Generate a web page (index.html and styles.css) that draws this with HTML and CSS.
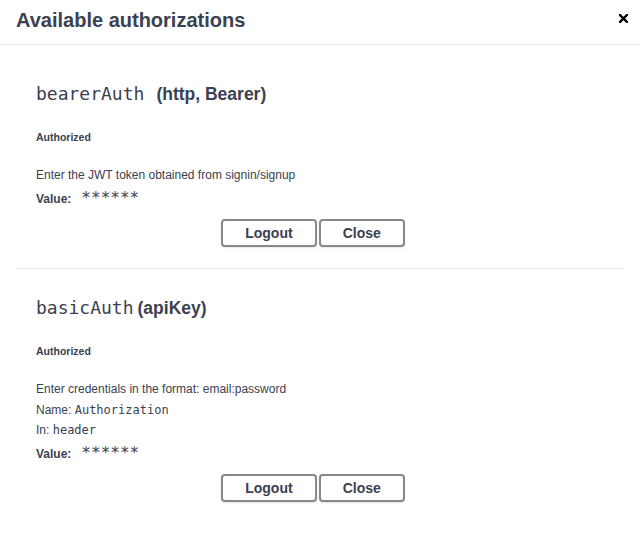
FILE: index.html
```html
<!DOCTYPE html>
<html>
<head>
<meta charset="utf-8">
<link rel="stylesheet" href="styles.css">
</head>
<body>
<div class="modal">
  <div class="modal-header">
    <h3 class="modal-title">Available authorizations</h3>
    <button class="close-modal" aria-label="Close">
      <svg width="9" height="9" viewBox="0 0 9 9"><path d="M1 1 L8 8 M8 1 L1 8" stroke="#000" stroke-width="2.4" stroke-linecap="square"/></svg>
    </button>
  </div>
  <div class="modal-content">
    <div class="auth-container">
      <h4 class="auth-title"><code class="auth-name">bearerAuth</code><span class="auth-type wide">(http, Bearer)</span></h4>
      <h6 class="auth-status">Authorized</h6>
      <p class="line first">Enter the JWT token obtained from signin/signup</p>
      <div class="line value-row"><label class="value-label">Value:</label><code class="stars">******</code></div>
      <div class="auth-btn-wrapper">
        <button class="btn">Logout</button>
        <button class="btn btn-done">Close</button>
      </div>
    </div>
    <div class="auth-container">
      <h4 class="auth-title"><code class="auth-name">basicAuth</code><span class="auth-type">(apiKey)</span></h4>
      <h6 class="auth-status">Authorized</h6>
      <p class="line first">Enter credentials in the format: email:password</p>
      <p class="line next">Name: <code class="mono">Authorization</code></p>
      <p class="line">In: <code class="mono">header</code></p>
      <div class="line value-row"><label class="value-label">Value:</label><code class="stars">******</code></div>
      <div class="auth-btn-wrapper">
        <button class="btn">Logout</button>
        <button class="btn btn-done">Close</button>
      </div>
    </div>
  </div>
</div>
</body>
</html>
```

FILE: styles.css
```css
html, body {
  margin: 0;
  padding: 0;
  background: #ffffff;
}

body {
  font-family: "Liberation Sans", Arial, Helvetica, sans-serif;
  color: #3b4151;
}

.modal {
  width: 640px;
}

.modal-header {
  height: 45px;
  box-sizing: border-box;
  display: flex;
  align-items: flex-start;
  padding: 8px 12px 0 16px;
  border-bottom: 1px solid #ebebeb;
}

.modal-title {
  flex: 1;
  margin: 0;
  font-size: 20px;
  line-height: 24px;
  font-weight: 700;
  color: #3b4151;
}

.close-modal {
  border: none;
  background: none;
  padding: 0;
  margin: 6px 0 0 0;
  width: 9px;
  height: 9px;
  display: flex;
}

.modal-content {
  padding: 10px 16px 0 16px;
}

.auth-container {
  padding: 0 20px 21px 20px;
  border-bottom: 1px solid #ebebeb;
}

.auth-container:last-child {
  border-bottom: none;
}

.auth-title {
  margin: 27px 0 0 0;
  height: 24px;
  line-height: 24px;
  font-size: 17.5px;
  font-weight: 700;
  white-space: nowrap;
}

.auth-name {
  font-family: "DejaVu Sans Mono", monospace;
  font-size: 18px;
  font-weight: 400;
  color: #3b4151;
}

.auth-type {
  margin-left: 4px;
}

.auth-type.wide {
  margin-left: 12px;
}

.auth-status {
  margin: 23.5px 0 0 0;
  font-size: 10.5px;
  line-height: 14px;
  font-weight: 700;
}

.line {
  margin: 0;
  font-size: 12px;
  line-height: 20px;
  height: 20px;
}

.line.first {
  margin-top: 21.5px;
}

.line.next {
  margin-top: 1px;
}

.mono {
  font-family: "DejaVu Sans Mono", monospace;
  font-size: 12px;
}

.value-row {
  margin-top: 3px;
  display: flex;
  align-items: baseline;
}

.value-label {
  font-weight: 700;
  font-size: 12px;
}

.stars {
  font-family: "DejaVu Sans Mono", monospace;
  font-size: 16px;
  margin-left: 10px;
  line-height: 20px;
}

.auth-btn-wrapper {
  display: flex;
  justify-content: center;
  gap: 2px;
  margin-top: 11px;
}

.btn {
  font-family: "Liberation Sans", Arial, sans-serif;
  font-size: 14px;
  font-weight: 700;
  line-height: 20px;
  height: 28px;
  padding: 2px 22px;
  color: #3b4151;
  background: #ffffff;
  border: 2px solid #888888;
  border-radius: 4px;
  box-shadow: 0 1px 2px rgba(0, 0, 0, 0.1);
}

.btn-done {
  margin-right: 14px;
}
```
